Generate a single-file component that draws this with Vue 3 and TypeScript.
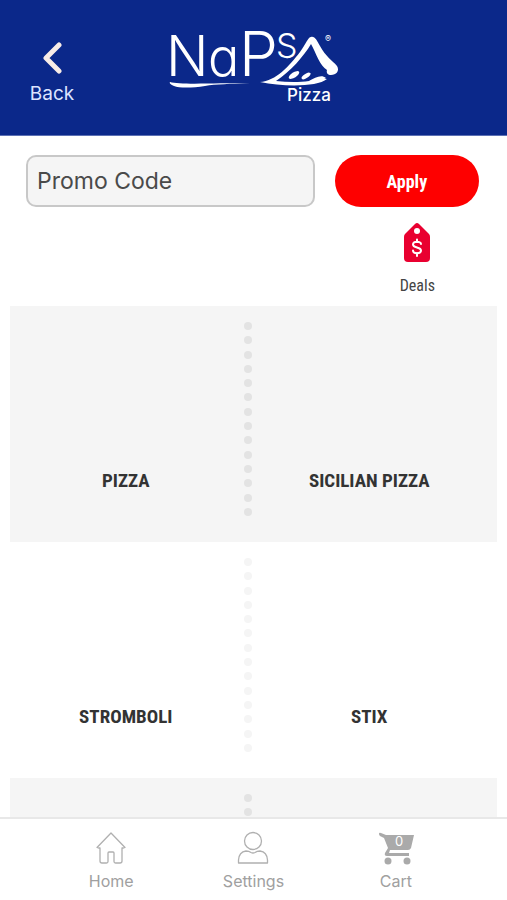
<script setup lang="ts">
import { ref } from 'vue'

interface MenuRow {
  id: number
  items: string[]
}

const promoCode = ref('')
const cartCount = ref(0)
const dotsPerDivider = 14

const rows: MenuRow[] = [
  { id: 1, items: ['PIZZA', 'SICILIAN PIZZA'] },
  { id: 2, items: ['STROMBOLI', 'STIX'] },
  { id: 3, items: [] },
]
</script>

<template>
  <div class="app">
    <header class="header">
      <button class="back" type="button">
        <svg class="back-icon" viewBox="0 0 20 32" aria-hidden="true">
          <path d="M17 3 4 16l13 13" />
        </svg>
        <span>Back</span>
      </button>
      <svg class="logo" viewBox="0 0 172 80" role="img" aria-label="NaPSA Pizza">
        <g class="wordmark">
          <text x="-4" y="52" font-size="56">N</text>
          <text x="38" y="52" font-size="52">a</text>
          <text x="69" y="52" font-size="62">P</text>
          <text x="106" y="34" font-size="34">S</text>
        </g>
        <path d="M0 58C10 61 45 59 80 59C60 60 46 60 35 62C22 64 9 64 4 62C1 61-1 59 0 58Z" />
        <path d="M90 58C106 57 119 42 130 28C136 20 138 13 141 13C145 12 147 17 150 22C156 33 162 36 167 42C170 47 166 51 161 51C158 51 156 49 157 46C150 42 146 29 141 20C134 32 120 48 106 57C124 59 142 58 150 54L157 55C147 63 114 63 90 58Z" />
        <ellipse cx="124" cy="51" rx="6" ry="2.7" transform="rotate(-32 124 51)" />
        <ellipse cx="136" cy="52" rx="5" ry="2.2" transform="rotate(-32 136 52)" />
        <path d="M139 57C145 54 151 50 156 54C151 57 145 59 139 59Z" />
        <text class="registered" x="155" y="18">®</text>
        <text class="pizza" x="117" y="77">Pizza</text>
      </svg>
    </header>

    <main class="content">
      <form class="promo" @submit.prevent>
        <input v-model="promoCode" class="promo-input" type="text" placeholder="Promo Code" aria-label="Promo Code" />
        <button class="apply" type="submit">Apply</button>
      </form>

      <div class="deals-row">
        <a class="deals" href="#deals">
          <svg class="deals-icon" viewBox="0 0 26 40" aria-hidden="true">
            <path fill="#e90030" d="M11 1Q13-1 15 1L25 11Q26 12 26 14V35Q26 39 22 39H4Q0 39 0 35V14Q0 12 1 11Z" />
            <circle cx="13" cy="8" r="3" fill="#fff" />
            <path class="dollar" d="M17 21C17 18 9 18 9 21.500C9 25.500 17 23.500 17 27.500C17 31 9 31 9 27.500M13 16.500V19M13 30V33" />
          </svg>
          <span>Deals</span>
        </a>
      </div>

      <nav class="menu" aria-label="Menu">
        <section v-for="row in rows" :key="row.id" class="menu-row">
          <a class="menu-item" href="#menu">{{ row.items[0] }}</a>
          <div class="divider" aria-hidden="true">
            <i v-for="dot in dotsPerDivider" :key="dot" class="dot"></i>
          </div>
          <a class="menu-item" href="#menu">{{ row.items[1] }}</a>
        </section>
      </nav>
    </main>

    <nav class="tabs" aria-label="Main">
      <a class="tab" href="#home">
        <svg class="tab-icon" viewBox="0 0 36 36" aria-hidden="true">
          <path class="line" d="M18 3 32 17.500 30.500 18H29V31Q29 33 27 33H22.500Q21 33 21 31.500V23Q21 22 20 22H16Q15 22 15 23V31.500Q15 33 13.500 33H9Q7 33 7 31V18H5.500L4 17.500Z" />
        </svg>
        <span>Home</span>
      </a>
      <a class="tab" href="#settings">
        <svg class="tab-icon" viewBox="0 0 36 36" aria-hidden="true">
          <circle class="line" cx="18" cy="11" r="8.500" />
          <path class="line" d="M11 21Q14 21 16 22.500Q18 23.500 20 22.500Q22 21 25 21Q32 22 32.500 30V33H3.500V30Q4 22 11 21Z" />
        </svg>
        <span>Settings</span>
      </a>
      <a class="tab" href="#cart">
        <svg class="tab-icon" viewBox="0 0 36 36" aria-hidden="true">
          <path fill="#aaa" d="M1 4Q1 2 3 3L8 5H36L33 18Q32 20 30 20H12L11 23H31V26H9Q6 26 7 23L10 18 6 8 2 6Q1 5 1 4Z" />
          <circle cx="10" cy="31" r="3.500" fill="#aaa" />
          <circle cx="29" cy="31" r="3.500" fill="#aaa" />
          <text class="count" x="21" y="16">{{ cartCount }}</text>
        </svg>
        <span>Cart</span>
      </a>
    </nav>
  </div>
</template>

<style>
body {
  margin: 0;
  background: #fff;
}
</style>

<style scoped>
.app {
  display: flex;
  flex-direction: column;
  height: 100vh;
  font-family: Inter, "Liberation Sans", sans-serif;
}

.app * {
  box-sizing: border-box;
}

a {
  color: inherit;
  text-decoration: none;
}

.header {
  display: grid;
  grid-template-columns: 104px 1fr 100px;
  flex: none;
  align-items: start;
  height: 136px;
  padding-top: 24px;
  background: #0b288a;
  border-bottom: 1px solid #5c70b4;
}

.back {
  display: flex;
  flex-direction: column;
  align-items: center;
  gap: 8px;
  padding: 18px 0 0;
  border: 0;
  background: none;
  color: #dde4ff;
  font: 19px/24px Inter, "Liberation Sans", sans-serif;
}

.back-icon {
  width: 20px;
  height: 32px;
}

.back-icon path {
  fill: none;
  stroke: #f8ece7;
  stroke-width: 5;
  stroke-linecap: round;
  stroke-linejoin: round;
}

.logo {
  justify-self: center;
  width: 172px;
  height: 80px;
  overflow: visible;
  fill: #fff;
}

.wordmark {
  font-family: Inter, sans-serif;
  font-weight: 300;
  font-feature-settings: "cv11";
}

.registered {
  font-size: 9px;
}

.pizza {
  font-size: 17px;
  font-weight: 500;
}

.content {
  display: flex;
  flex: 1;
  flex-direction: column;
  min-height: 0;
  overflow: auto;
  scrollbar-width: none;
}

.promo {
  display: grid;
  grid-template-columns: 2fr 1fr;
  flex: none;
  gap: 20px;
  padding: 19px 28px 0 26px;
}

.promo-input {
  width: 100%;
  height: 52px;
  padding: 0 9px;
  border: 2px solid #c8c8c8;
  border-radius: 10px;
  background: #f5f5f5;
  color: #4a4a4a;
  font: 23px/28px Inter, "Liberation Sans", sans-serif;
}

.promo-input::placeholder {
  color: #4a4a4a;
  opacity: 1;
}

.apply {
  height: 52px;
  padding: 2px 0 0;
  border: 0;
  border-radius: 26px;
  background: #fe0000;
  color: #fff;
  font: 700 18px/24px "Roboto Condensed", "Liberation Sans Narrow", sans-serif;
}

.deals-row {
  display: flex;
  flex: none;
  justify-content: flex-end;
  padding: 16px 72px 9px 0;
}

.deals {
  display: flex;
  flex-direction: column;
  align-items: center;
  gap: 12px;
  color: #444;
  font: 16px/22px "Roboto Condensed", "Liberation Sans Narrow", sans-serif;
}

.deals-icon {
  width: 26px;
  height: 40px;
}

.dollar {
  fill: none;
  stroke: #fff;
  stroke-width: 2;
  stroke-linecap: round;
}

.menu {
  flex: none;
  margin: 0 10px;
}

.menu-row {
  display: grid;
  grid-template-columns: 1fr 12px 1fr;
  height: 236px;
  padding: 16px 12px 26px 0;
}

.menu-row:nth-child(odd) {
  background: #f5f5f5;
}

.menu-item {
  align-self: end;
  padding-bottom: 21px;
  color: #333;
  font: 700 19px/28px "Roboto Condensed", "Liberation Sans Narrow", sans-serif;
  text-align: center;
}

.divider {
  display: flex;
  flex-direction: column;
  align-items: center;
  justify-content: space-between;
}

.dot {
  width: 8px;
  height: 8px;
  border-radius: 4px;
  background: #e3e3e3;
}

.menu-row:nth-child(even) .dot {
  background: #f5f5f5;
}

.tabs {
  display: grid;
  grid-template-columns: repeat(3, 1fr);
  flex: none;
  padding: 11px 40px 9px;
  border-top: 2px solid #e8e8e8;
  background: #fff;
}

.tab {
  display: flex;
  flex-direction: column;
  align-items: center;
  gap: 5px;
  color: #a0a0a0;
  font-size: 16px;
  line-height: 20px;
}

.tab-icon {
  width: 36px;
  height: 36px;
}

.line {
  fill: none;
  stroke: #b0b0b0;
  stroke-width: 1.3;
  stroke-linejoin: round;
}

.count {
  fill: #fff;
  font-size: 13px;
  text-anchor: middle;
}
</style>
